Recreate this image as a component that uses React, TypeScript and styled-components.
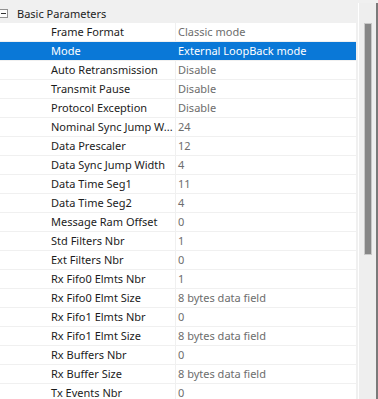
import styled, { createGlobalStyle } from "styled-components";

const GlobalStyle = createGlobalStyle`
  html, body {
    margin: 0;
    padding: 0;
    background: #f0f0f0;
  }
  body {
    font-family: "Noto Sans", "Open Sans", sans-serif;
    font-size: 11px;
  }
`;

const Frame = styled.div`
  width: 378px;
  height: 399px;
  overflow: hidden;
  background: #f0f0f0;
  border-top: 3px solid #f0f0f0;
  box-sizing: border-box;
  display: flex;
  flex-direction: column;
  position: relative;
  &::before {
    content: "";
    position: absolute;
    left: 0;
    right: 0;
    top: -1px;
    height: 1px;
    background: #a8a8a8;
  }
`;

const Body = styled.div`
  display: flex;
  flex: 1;
  min-height: 0;
`;

const Table = styled.div`
  width: 358px;
  display: flex;
  flex-direction: column;
  border-right: 1px solid #ffffff;
`;

const Group = styled.div`
  height: 20px;
  flex-shrink: 0;
  display: flex;
  align-items: center;
  gap: 9px;
  color: #1c1c1c;
`;

const Toggle = styled.span`
  width: 9px;
  height: 9px;
  margin-left: -1px;
  box-sizing: border-box;
  border: 1px solid #919191;
  background: #fcfcfc;
  display: flex;
  align-items: center;
  justify-content: center;
  &::after {
    content: "";
    width: 5px;
    height: 1px;
    background: #333;
  }
`;

const Row = styled.div<{ $selected?: boolean }>`
  height: 18px;
  flex-shrink: 0;
  margin-bottom: 1px;
  margin-right: 2px;
  display: flex;
  gap: 1px;
  line-height: 18px;
  background: ${(p) => (p.$selected ? "#0a78d7" : "transparent")};
`;

const Label = styled.div<{ $selected?: boolean }>`
  width: 124px;
  padding-left: 51px;
  background: ${(p) => (p.$selected ? "#0a78d7" : "#ffffff")};
  color: ${(p) => (p.$selected ? "#ffffff" : "#1c1c1c")};
  white-space: nowrap;
  overflow: hidden;
`;

const Value = styled.div<{ $selected?: boolean }>`
  flex: 1;
  padding-left: 2px;
  background: ${(p) => (p.$selected ? "#0a78d7" : "#ffffff")};
  color: ${(p) => (p.$selected ? "#ffffff" : "#6d6d6d")};
  white-space: nowrap;
  overflow: hidden;
`;

const ScrollBar = styled.div`
  flex: 1;
  background: #eeeeee;
  border-right: 2px solid #7a7a7a;
  padding-top: 20px;
  display: flex;
  justify-content: center;
`;

const Thumb = styled.div`
  width: 6px;
  height: 230px;
  background: #868686;
  border: 1px solid #c8c8c8;
`;

const params: [string, string][] = [
  ["Frame Format", "Classic mode"],
  ["Mode", "External LoopBack mode"],
  ["Auto Retransmission", "Disable"],
  ["Transmit Pause", "Disable"],
  ["Protocol Exception", "Disable"],
  ["Nominal Sync Jump W...", "24"],
  ["Data Prescaler", "12"],
  ["Data Sync Jump Width", "4"],
  ["Data Time Seg1", "11"],
  ["Data Time Seg2", "4"],
  ["Message Ram Offset", "0"],
  ["Std Filters Nbr", "1"],
  ["Ext Filters Nbr", "0"],
  ["Rx Fifo0 Elmts Nbr", "1"],
  ["Rx Fifo0 Elmt Size", "8 bytes data field"],
  ["Rx Fifo1 Elmts Nbr", "0"],
  ["Rx Fifo1 Elmt Size", "8 bytes data field"],
  ["Rx Buffers Nbr", "0"],
  ["Rx Buffer Size", "8 bytes data field"],
  ["Tx Events Nbr", "0"],
];

export default function App() {
  return (
    <>
      <GlobalStyle />
      <Frame>
        <Body>
          <Table>
            <Group>
              <Toggle />
              Basic Parameters
            </Group>
            {params.map(([name, value]) => {
              const sel = name === "Mode";
              return (
                <Row key={name} $selected={sel}>
                  <Label $selected={sel}>{name}</Label>
                  <Value $selected={sel}>{value}</Value>
                </Row>
              );
            })}
          </Table>
          <ScrollBar>
            <Thumb />
          </ScrollBar>
        </Body>
      </Frame>
    </>
  );
}
